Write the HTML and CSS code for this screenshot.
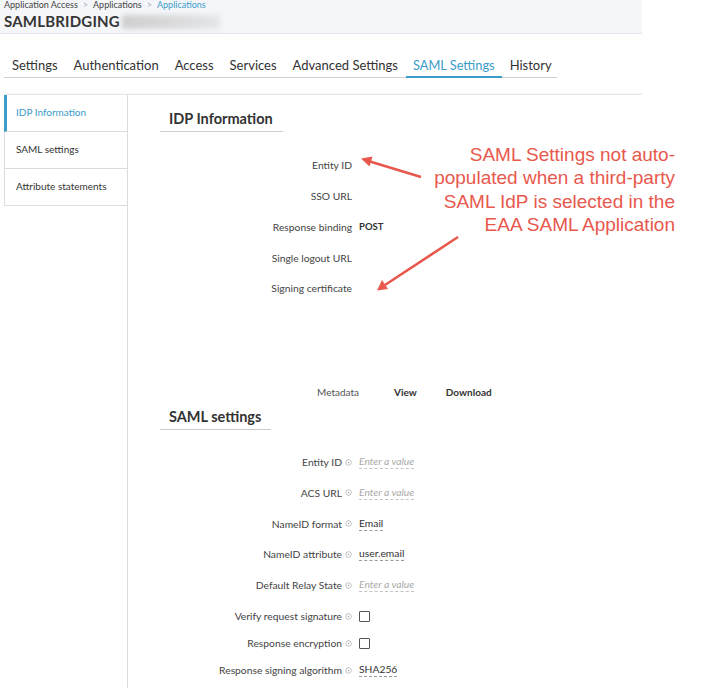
FILE: index.html
```html
<!DOCTYPE html>
<html>
<head>
<meta charset="utf-8">
<link rel="stylesheet" href="styles.css">
</head>
<body>
<div class="page">
  <header class="header">
    <div class="crumbs">
      <span>Application Access</span><span class="sep">&gt;</span><span>Applications</span><span class="sep">&gt;</span><span class="crumb-active">Applications</span>
    </div>
    <div class="title">SAMLBRIDGING<span class="blurred"></span></div>
  </header>

  <nav class="tabs">
    <span class="tab">Settings</span>
    <span class="tab">Authentication</span>
    <span class="tab">Access</span>
    <span class="tab">Services</span>
    <span class="tab">Advanced Settings</span>
    <span class="tab tab-active">SAML Settings</span>
    <span class="tab">History</span>
  </nav>

  <div class="main">
    <aside class="sidebar">
      <div class="side-item side-active">IDP Information</div>
      <div class="side-item">SAML settings</div>
      <div class="side-item">Attribute statements</div>
    </aside>

    <section class="content">
      <h2 class="section-title title-idp">IDP Information</h2>
      <div class="rows rows-idp">
        <div class="row"><span class="label">Entity ID</span><span class="value"></span></div>
        <div class="row"><span class="label">SSO URL</span><span class="value"></span></div>
        <div class="row"><span class="label">Response binding</span><span class="value strong">POST</span></div>
        <div class="row"><span class="label">Single logout URL</span><span class="value"></span></div>
        <div class="row"><span class="label">Signing certificate</span><span class="value"></span></div>
      </div>

      <div class="metadata">
        <span class="meta-label">Metadata</span>
        <span class="meta-link meta-view">View</span>
        <span class="meta-link">Download</span>
      </div>

      <h2 class="section-title title-saml">SAML settings</h2>
      <div class="rows rows-saml">
        <div class="row"><span class="label">Entity ID<svg class="info" viewBox="0 0 8 8"><circle cx="4" cy="4" r="3.2"/><circle class="dot" cx="4" cy="4" r="0.9"/></svg></span><span class="value"><span class="field placeholder">Enter a value</span></span></div>
        <div class="row"><span class="label">ACS URL<svg class="info" viewBox="0 0 8 8"><circle cx="4" cy="4" r="3.2"/><circle class="dot" cx="4" cy="4" r="0.9"/></svg></span><span class="value"><span class="field placeholder">Enter a value</span></span></div>
        <div class="row"><span class="label">NameID format<svg class="info" viewBox="0 0 8 8"><circle cx="4" cy="4" r="3.2"/><circle class="dot" cx="4" cy="4" r="0.9"/></svg></span><span class="value"><span class="field">Email</span></span></div>
        <div class="row"><span class="label">NameID attribute<svg class="info" viewBox="0 0 8 8"><circle cx="4" cy="4" r="3.2"/><circle class="dot" cx="4" cy="4" r="0.9"/></svg></span><span class="value"><span class="field">user.email</span></span></div>
        <div class="row"><span class="label">Default Relay State<svg class="info" viewBox="0 0 8 8"><circle cx="4" cy="4" r="3.2"/><circle class="dot" cx="4" cy="4" r="0.9"/></svg></span><span class="value"><span class="field placeholder">Enter a value</span></span></div>
        <div class="row row-short row-gap"><span class="label">Verify request signature<svg class="info" viewBox="0 0 8 8"><circle cx="4" cy="4" r="3.2"/><circle class="dot" cx="4" cy="4" r="0.9"/></svg></span><span class="value"><span class="checkbox"></span></span></div>
        <div class="row row-short"><span class="label">Response encryption<svg class="info" viewBox="0 0 8 8"><circle cx="4" cy="4" r="3.2"/><circle class="dot" cx="4" cy="4" r="0.9"/></svg></span><span class="value"><span class="checkbox"></span></span></div>
        <div class="row row-short"><span class="label">Response signing algorithm<svg class="info" viewBox="0 0 8 8"><circle cx="4" cy="4" r="3.2"/><circle class="dot" cx="4" cy="4" r="0.9"/></svg></span><span class="value"><span class="field">SHA256</span></span></div>
      </div>
    </section>
  </div>

  <div class="annotation">SAML Settings not auto-<br>populated when a third-party<br>SAML IdP is selected in the<br>EAA SAML Application</div>

  <svg class="arrows" viewBox="0 0 708 688" width="708" height="688">
    <line x1="421" y1="177" x2="370" y2="161.5"/>
    <polygon points="361,158.5 372.5,156.5 369.5,166.5"/>
    <line x1="458" y1="237" x2="385" y2="285"/>
    <polygon points="377,290.5 382,280 388,289"/>
  </svg>
</div>
</body>
</html>
```

FILE: styles.css
```css
* { box-sizing: border-box; }

html, body {
  margin: 0;
  padding: 0;
  background: #ffffff;
}

body {
  font-family: Lato, "Open Sans", sans-serif;
  color: #333333;
  width: 708px;
  height: 688px;
  overflow: hidden;
}

.page {
  position: relative;
  width: 708px;
  height: 688px;
}

/* ---------- header ---------- */
.header {
  width: 642px;
  height: 34px;
  background: #f4f6f9;
  border-bottom: 1px solid #e2e5ea;
  padding-left: 4px;
}

.crumbs {
  font-size: 9px;
  line-height: 10px;
  color: #444;
  display: flex;
  white-space: nowrap;
}

.sep {
  color: #aab0b8;
  margin: 0 5px;
}

.crumb-active {
  color: #3c9cc9;
}

.title {
  margin-top: 2px;
  font-size: 15px;
  font-weight: 700;
  line-height: 19px;
  color: #353535;
  letter-spacing: 0.2px;
  display: flex;
  align-items: center;
}

.blurred {
  display: inline-block;
  width: 98px;
  height: 14px;
  margin-left: 2px;
  background: linear-gradient(90deg, #cfcfcf, #d9d9d9 50%, #e4e6ea);
  filter: blur(2.5px);
}

/* ---------- tabs ---------- */
.tabs {
  display: flex;
  width: 553px;
  margin: 23px 0 0 4px;
  border-bottom: 1px solid #cfcfcf;
}

.tab {
  flex: none;
  white-space: nowrap;
  padding: 0 8px 3px;
  font-size: 13px;
  line-height: 16px;
  color: #333;
  border-bottom: 2px solid transparent;
  margin-bottom: -1px;
}

.tab-active {
  color: #3c9cc9;
  border-bottom-color: #3c9cc9;
  padding: 0 7px 3px;
  font-size: 12.8px;
}

/* ---------- main ---------- */
.main {
  display: flex;
  width: 638px;
  margin: 16px 0 0 4px;
  border-top: 1px solid #e8e8e8;
  box-shadow: 0 -1px 1px rgba(0,0,0,0.03);
  height: 600px;
}

.sidebar {
  width: 124px;
  flex: none;
  border-right: 1px solid #dcdcdc;
}

.side-item {
  height: 37px;
  border-left: 1px solid #dcdcdc;
  border-bottom: 1px solid #dcdcdc;
  padding-left: 11px;
  font-size: 10px;
  line-height: 34px;
  color: #333;
  white-space: nowrap;
}

.side-active {
  border-left: 3px solid #3c9cc9;
  padding-left: 9px;
  color: #3c9cc9;
}

.content {
  flex: 1;
  padding-top: 13px;
}

.section-title {
  margin: 0 0 0 32px;
  padding: 0 10px 2px 9px;
  display: inline-block;
  font-size: 14.5px;
  font-weight: 700;
  line-height: 20px;
  color: #333;
  border-bottom: 1px solid #cccccc;
}

.title-saml {
  margin-top: 5px;
}

.rows-idp {
  margin-top: 18px;
}

.rows-saml {
  margin-top: 17px;
}

.row {
  display: grid;
  grid-template-columns: 224px 1fr;
  column-gap: 7px;
  align-items: center;
  height: 30.75px;
  font-size: 10.3px;
  white-space: nowrap;
}

.row-short {
  height: 27px;
}

.row-gap {
  margin-top: 2px;
}

.label {
  text-align: right;
  color: #444;
  display: flex;
  justify-content: flex-end;
  align-items: center;
}

.info {
  width: 7px;
  height: 7px;
  margin-left: 3px;
  fill: none;
  stroke: #a8a8a8;
  stroke-width: 0.8;
}

.info .dot {
  fill: #a8a8a8;
  stroke: none;
}

.value {
  color: #333;
}

.strong {
  font-weight: 700;
  font-size: 9.5px;
}

.field {
  display: inline-block;
  border-bottom: 1px dashed #9a9a9a;
  line-height: 13px;
  color: #333;
}

.placeholder {
  color: #a9a9a9;
  font-style: italic;
  border-bottom-color: #c4c4c4;
}

.checkbox {
  display: inline-block;
  width: 11px;
  height: 11px;
  border: 1px solid #555;
  border-radius: 1px;
  vertical-align: middle;
}

/* ---------- metadata ---------- */
.metadata {
  display: flex;
  margin: 78px 0 0 189px;
  font-size: 10px;
  line-height: 20px;
  white-space: nowrap;
}

.meta-label {
  color: #555;
}

.meta-link {
  font-weight: 700;
  color: #333;
}

.meta-view {
  margin: 0 29px 0 35px;
}

/* ---------- annotation overlay ---------- */
.annotation {
  position: absolute;
  right: 33px;
  top: 143px;
  font-family: "Liberation Sans", Arial, sans-serif;
  font-size: 19px;
  line-height: 23.3px;
  text-align: right;
  color: #e8584d;
  white-space: nowrap;
}

.arrows {
  position: absolute;
  left: 0;
  top: 0;
  pointer-events: none;
}

.arrows line {
  stroke: #e8584d;
  stroke-width: 2.6;
}

.arrows polygon {
  fill: #e8584d;
}
```
